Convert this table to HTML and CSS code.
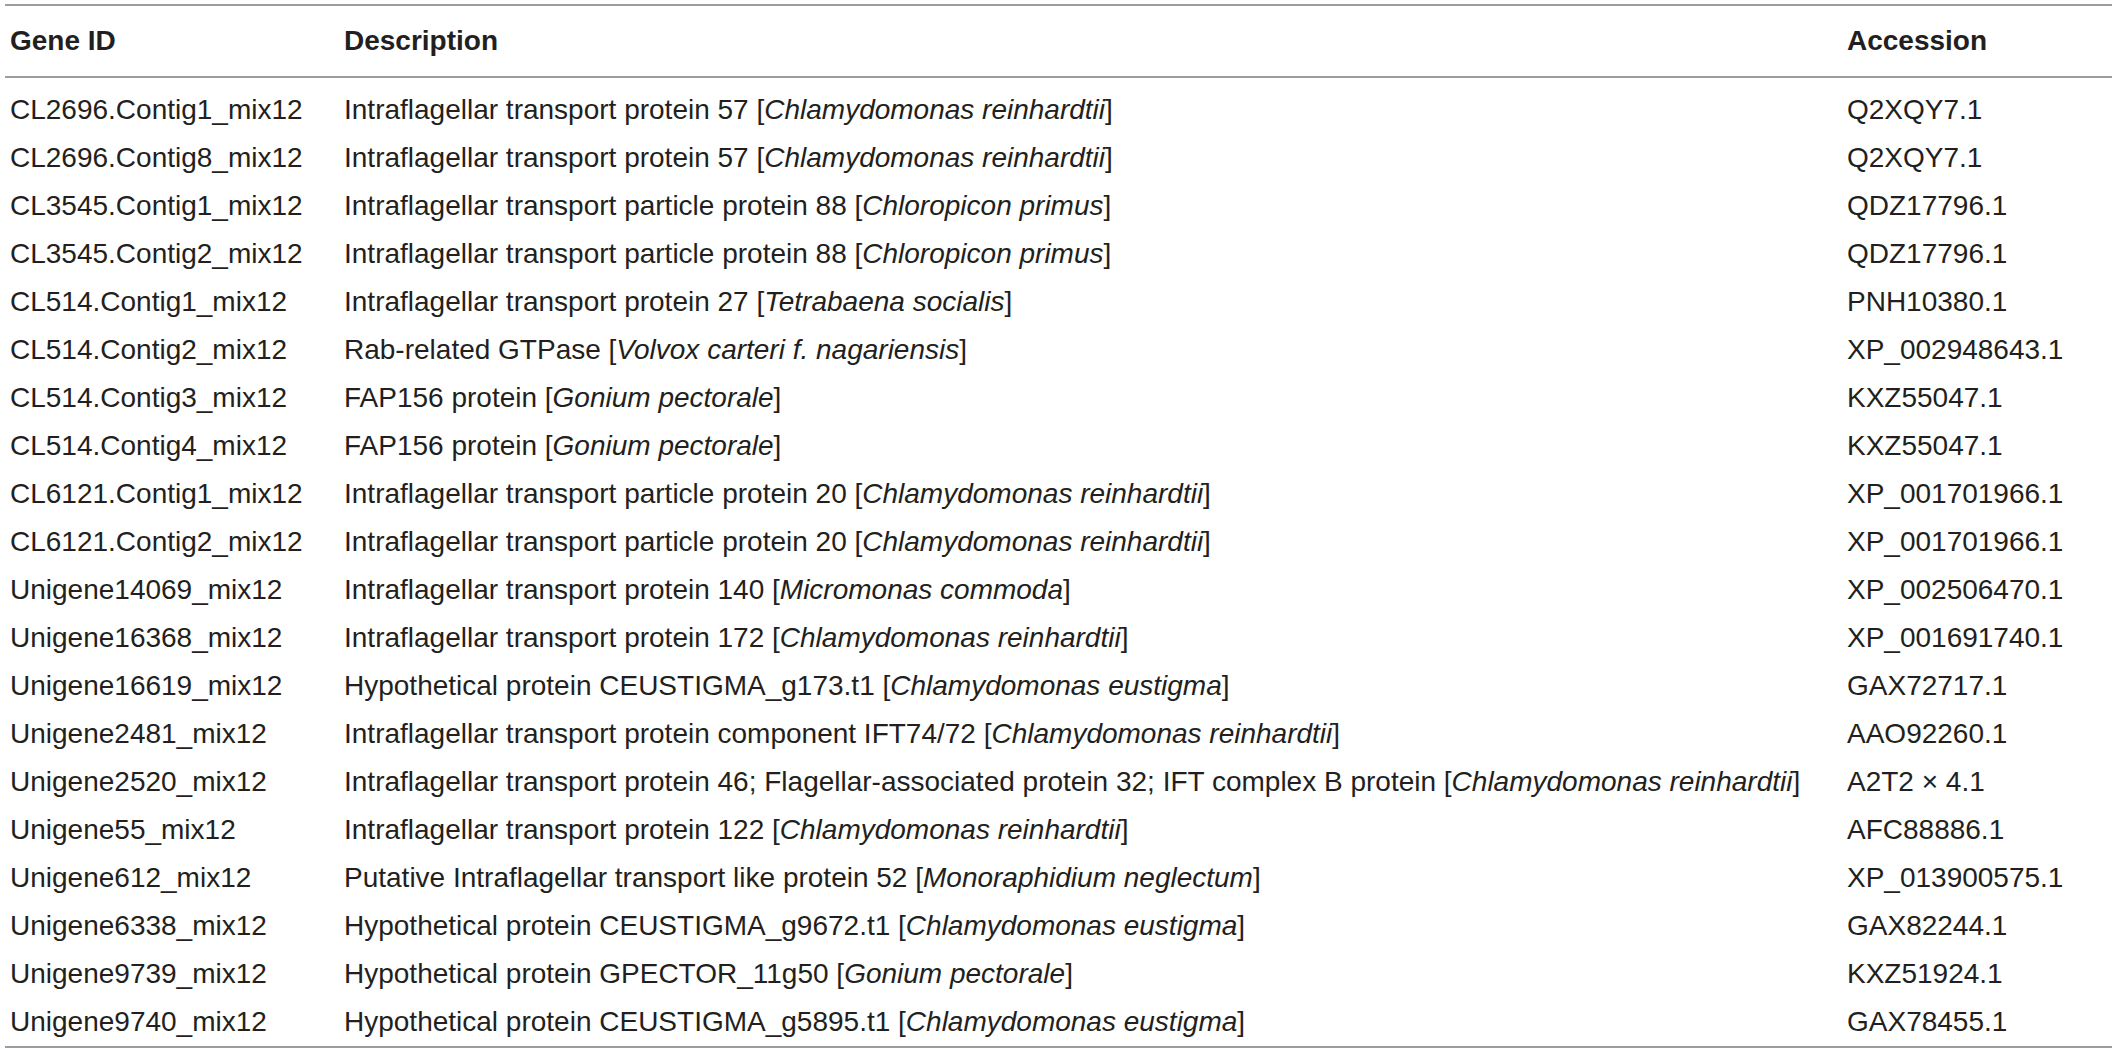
FILE: index.html
```html
<!DOCTYPE html>
<html lang="en">
<head>
<meta charset="utf-8">
<title>Gene table</title>
<link rel="stylesheet" href="styles.css">
</head>
<body>
<table class="gene-table">
  <colgroup>
    <col class="col-id">
    <col class="col-desc">
    <col class="col-acc">
  </colgroup>
  <thead>
    <tr><th>Gene ID</th><th>Description</th><th>Accession</th></tr>
  </thead>
  <tbody>
    <tr class="first"><td>CL2696.Contig1_mix12</td><td>Intraflagellar transport protein 57 [<i>Chlamydomonas reinhardtii</i>]</td><td>Q2XQY7.1</td></tr>
    <tr><td>CL2696.Contig8_mix12</td><td>Intraflagellar transport protein 57 [<i>Chlamydomonas reinhardtii</i>]</td><td>Q2XQY7.1</td></tr>
    <tr><td>CL3545.Contig1_mix12</td><td>Intraflagellar transport particle protein 88 [<i>Chloropicon primus</i>]</td><td>QDZ17796.1</td></tr>
    <tr><td>CL3545.Contig2_mix12</td><td>Intraflagellar transport particle protein 88 [<i>Chloropicon primus</i>]</td><td>QDZ17796.1</td></tr>
    <tr><td>CL514.Contig1_mix12</td><td>Intraflagellar transport protein 27 [<i>Tetrabaena socialis</i>]</td><td>PNH10380.1</td></tr>
    <tr><td>CL514.Contig2_mix12</td><td>Rab-related GTPase [<i>Volvox carteri f. nagariensis</i>]</td><td>XP_002948643.1</td></tr>
    <tr><td>CL514.Contig3_mix12</td><td>FAP156 protein [<i>Gonium pectorale</i>]</td><td>KXZ55047.1</td></tr>
    <tr><td>CL514.Contig4_mix12</td><td>FAP156 protein [<i>Gonium pectorale</i>]</td><td>KXZ55047.1</td></tr>
    <tr><td>CL6121.Contig1_mix12</td><td>Intraflagellar transport particle protein 20 [<i>Chlamydomonas reinhardtii</i>]</td><td>XP_001701966.1</td></tr>
    <tr><td>CL6121.Contig2_mix12</td><td>Intraflagellar transport particle protein 20 [<i>Chlamydomonas reinhardtii</i>]</td><td>XP_001701966.1</td></tr>
    <tr><td>Unigene14069_mix12</td><td>Intraflagellar transport protein 140 [<i>Micromonas commoda</i>]</td><td>XP_002506470.1</td></tr>
    <tr><td>Unigene16368_mix12</td><td>Intraflagellar transport protein 172 [<i>Chlamydomonas reinhardtii</i>]</td><td>XP_001691740.1</td></tr>
    <tr><td>Unigene16619_mix12</td><td>Hypothetical protein CEUSTIGMA_g173.t1 [<i>Chlamydomonas eustigma</i>]</td><td>GAX72717.1</td></tr>
    <tr><td>Unigene2481_mix12</td><td>Intraflagellar transport protein component IFT74/72 [<i>Chlamydomonas reinhardtii</i>]</td><td>AAO92260.1</td></tr>
    <tr><td>Unigene2520_mix12</td><td>Intraflagellar transport protein 46; Flagellar-associated protein 32; IFT complex B protein [<i>Chlamydomonas reinhardtii</i>]</td><td>A2T2 × 4.1</td></tr>
    <tr><td>Unigene55_mix12</td><td>Intraflagellar transport protein 122 [<i>Chlamydomonas reinhardtii</i>]</td><td>AFC88886.1</td></tr>
    <tr><td>Unigene612_mix12</td><td>Putative Intraflagellar transport like protein 52 [<i>Monoraphidium neglectum</i>]</td><td>XP_013900575.1</td></tr>
    <tr><td>Unigene6338_mix12</td><td>Hypothetical protein CEUSTIGMA_g9672.t1 [<i>Chlamydomonas eustigma</i>]</td><td>GAX82244.1</td></tr>
    <tr><td>Unigene9739_mix12</td><td>Hypothetical protein GPECTOR_11g50 [<i>Gonium pectorale</i>]</td><td>KXZ51924.1</td></tr>
    <tr class="last"><td>Unigene9740_mix12</td><td>Hypothetical protein CEUSTIGMA_g5895.t1 [<i>Chlamydomonas eustigma</i>]</td><td>GAX78455.1</td></tr>
  </tbody>
</table>
</body>
</html>
```
FILE: styles.css
```css
html, body {
  margin: 0;
  padding: 0;
  background: #ffffff;
}

body {
  padding: 4px 0 0 5px;
}

.gene-table {
  width: 2107px;
  table-layout: fixed;
  border-collapse: collapse;
  font-family: "Liberation Sans", Arial, sans-serif;
  font-size: 28px;
  color: #231f20;
}

.col-id { width: 334px; }
.col-desc { width: 1503px; }
.col-acc { width: 270px; }

.gene-table th {
  font-weight: bold;
  text-align: left;
  height: 70px;
  padding: 0 5px;
  line-height: 30px;
  vertical-align: middle;
  border-top: 2px solid #9c9c9c;
  border-bottom: 2px solid #9c9c9c;
}

.gene-table td {
  padding: 0 5px;
  height: 48px;
  line-height: 30px;
  vertical-align: middle;
  white-space: nowrap;
  font-weight: normal;
}

.gene-table tr.first td {
  padding-top: 8px;
}

.gene-table tr.last td {
  border-bottom: 2px solid #9c9c9c;
}

.gene-table i {
  font-style: italic;
}
```
